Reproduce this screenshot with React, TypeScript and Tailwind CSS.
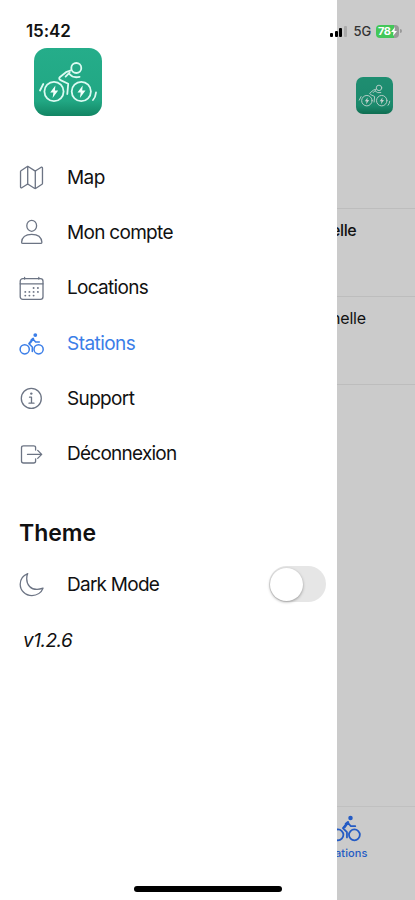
import React from "react";
import { IoMapOutline } from "react-icons/io5";

type IconProps = { className?: string };

function Logo({ className }: IconProps) {
  return (
    <svg viewBox="0 0 68 68" className={className} fill="none">
      <defs>
        <linearGradient id="tile" x1="0" y1="0" x2="0" y2="1">
          <stop offset="0" stopColor="#25ad8a" />
          <stop offset="0.78" stopColor="#21a783" />
          <stop offset="1" stopColor="#128563" />
        </linearGradient>
      </defs>
      <rect width="68" height="68" rx="13" fill="url(#tile)" />
      <g stroke="#dcfaf2" strokeWidth="1.8" strokeLinecap="round" strokeLinejoin="round">
        <circle cx="20" cy="43.5" r="9.6" />
        <circle cx="47.3" cy="43.5" r="9.6" />
        <circle cx="42.3" cy="20" r="5" />
        <path d="M37 22.3L32 24.2L26 29Q24 31 27 32.4L34.2 35.8L33.3 46" />
        <path d="M35.6 24.6L31.6 28.6" />
        <path d="M35.4 26Q39 30.4 45.6 28.8" />
        <path d="M9.3 36L6 42.5M62 44.5Q61.5 49.4 59 52" />
      </g>
      <path d="M21.4 37.5L16.2 44.5H19.4L18.6 50L24.2 42.4H20.9ZM48.7 37.5L43.5 44.5H46.7L45.9 50L51.5 42.4H48.2Z" fill="#f2fffb" />
    </svg>
  );
}

function Line({ className, children }: IconProps & { children: React.ReactNode }) {
  return (
    <svg viewBox="0 0 27 27" className={className} fill="none" stroke="currentColor" strokeWidth="1.3" strokeLinecap="round" strokeLinejoin="round">
      {children}
    </svg>
  );
}

const PersonIcon = ({ className }: IconProps) => (
  <Line className={className}>
    <ellipse cx="13.7" cy="6.8" rx="4.9" ry="5.5" />
    <path d="M3.6 23.2C4 17.6 8.4 15.3 13.7 15.3S23.4 17.6 23.9 23.2Q23.9 24.4 22.5 24.4H5Q3.6 24.4 3.6 23.2Z" />
  </Line>
);

const CalendarIcon = ({ className }: IconProps) => (
  <Line className={className}>
    <rect x="2.2" y="3.6" width="22.8" height="20.8" rx="2.6" />
    <path d="M2.2 8.8H25M6.6 2.4V4M20.8 2.4V4" />
    <g fill="currentColor" stroke="none">
      <circle cx="15.6" cy="13" r="0.95" />
      <circle cx="19.9" cy="13" r="0.95" />
      <circle cx="7.3" cy="16.9" r="0.95" />
      <circle cx="11.4" cy="16.9" r="0.95" />
      <circle cx="15.6" cy="16.9" r="0.95" />
      <circle cx="19.9" cy="16.9" r="0.95" />
      <circle cx="7.3" cy="20.6" r="0.95" />
      <circle cx="11.4" cy="20.6" r="0.95" />
      <circle cx="15.6" cy="20.6" r="0.95" />
    </g>
  </Line>
);

const BikeIcon = ({ className }: IconProps) => (
  <svg viewBox="0 0 27 27" className={className} fill="none" stroke="currentColor" strokeWidth="1.5" strokeLinecap="round" strokeLinejoin="round">
    <circle cx="6.7" cy="19.3" r="4.6" />
    <circle cx="20.6" cy="19.3" r="4.6" />
    <path d="M14.3 21.5V17L10.9 13.6L15 9L17.6 12H21.3" />
    <path d="M13.4 10L15.2 8.6L12.3 12.6" strokeWidth="2" />
    <circle cx="17.3" cy="5.1" r="1.9" fill="currentColor" stroke="none" />
  </svg>
);

const InfoIcon = ({ className }: IconProps) => (
  <Line className={className}>
    <circle cx="13.3" cy="13.4" r="10" />
    <path d="M11.5 12.2H13.5V18M11 18.2H16" />
    <circle cx="13.3" cy="8.6" r="1.2" fill="currentColor" stroke="none" />
  </Line>
);

const LogOutIcon = ({ className }: IconProps) => (
  <Line className={className}>
    <path d="M17.6 9V6.6Q17.6 4.8 15.6 4.8H5.6Q3.5 4.8 3.5 6.8V20Q3.5 22 5.6 22H15.6Q17.6 22 17.6 20.2V17.8M9.5 13.4H23.6M19.7 9.4L23.7 13.4L19.7 17.4" />
  </Line>
);

const MoonIcon = ({ className }: IconProps) => (
  <Line className={className}>
    <path d="M9.7 2.6C5.2 4.4 2.2 8.7 2.2 13.2C2.2 19.5 7.4 24.6 13.9 24.6C18.9 24.6 23.4 21.6 25 17.2C22.9 18 21 18.4 19 18.4C12.9 18.4 8.7 14 8.7 7.8C8.7 5.9 9 4.2 9.7 2.6Z" />
  </Line>
);

const MapIcon = ({ className }: IconProps) => (
  <IoMapOutline className={`${className} [&_*]:[stroke-width:25px]`} />
);

const items = [
  { label: "Map", Icon: MapIcon, text: "tracking-[-0.6px]" },
  { label: "Mon compte", Icon: PersonIcon, text: "tracking-[-0.7px]" },
  { label: "Locations", Icon: CalendarIcon, text: "tracking-[-0.7px]" },
  { label: "Stations", Icon: BikeIcon, text: "tracking-[-0.55px]", active: true },
  { label: "Support", Icon: InfoIcon, text: "tracking-[-0.65px]" },
  { label: "Déconnexion", Icon: LogOutIcon, text: "tracking-[-0.75px]" },
];

export default function App() {
  return (
    <div className="relative flex h-[900px] w-[415px] overflow-hidden bg-[#cbcbcb] font-['Inter',sans-serif] text-[#111]">
      <aside className="flex w-[337px] shrink-0 flex-col bg-white">
        <div className="pt-[21px] pl-[26px] text-[17px] leading-5 font-semibold tracking-[-0.1px]">15:42</div>
        <Logo className="mt-[7px] ml-[34px] size-[68px]" />
        <nav className="mt-[34px] flex flex-col">
          {items.map(({ label, Icon, text, active }) => (
            <a key={label} className={`flex h-[55.3px] items-center pl-[18px] ${active ? "text-[#3b7ee8]" : ""}`}>
              <Icon className={`size-[27px] ${active ? "" : "text-[#6c7484]"}`} />
              <span className={`ml-[22px] text-[19px] leading-6 ${text}`}>{label}</span>
            </a>
          ))}
        </nav>
        <h2 className="mt-[37px] ml-[19px] text-[23px] leading-7 font-semibold">Theme</h2>
        <div className="mt-[9px] flex h-[57px] items-center pr-[11px] pl-[18px]">
          <MoonIcon className="size-[27px] text-[#6c7484]" />
          <span className="mt-[2px] ml-[22px] text-[19px] leading-6 tracking-[-0.75px]">Dark Mode</span>
          <div className="ml-auto flex h-[36px] w-[57px] items-center rounded-full bg-[#e6e6e6] pl-px">
            <div className="size-[33px] rounded-full bg-white shadow-[0_1px_3px_rgba(0,0,0,0.35)]" />
          </div>
        </div>
        <p className="mt-[16px] ml-[23px] text-[19px] leading-6 tracking-[-0.5px] italic">v1.2.6</p>
      </aside>

      <main className="flex min-w-0 flex-1 flex-col overflow-hidden">
        <div className="flex h-[209px] items-start border-b border-[#bdbdbd] pt-[77px] pl-[19px]">
          <Logo className="size-[37px] brightness-[0.82]" />
        </div>
        <div className="flex h-[88px] justify-start border-b border-[#bdbdbd] pt-[11px]">
          <span className="-ml-[6px] text-[16px] leading-5 font-medium tracking-[-0.4px]">elle</span>
        </div>
        <div className="flex h-[88px] justify-start border-b border-[#bdbdbd] pt-[11px]">
          <span className="-ml-[6px] text-[16px] leading-5 tracking-[-0.2px]">nelle</span>
        </div>
        <div className="mt-auto flex h-[94px] flex-col border-t border-[#c0c0c0] pt-[5px] text-[#245bc4]">
          <BikeIcon className="-ml-[7px] size-[32px] shrink-0" />
          <span className="-ml-[2px] mt-px text-[11px] leading-4 font-medium tracking-[0.1px]">ations</span>
        </div>
      </main>

      <div className="absolute top-[24px] left-[330px] flex h-[14px] items-center">
        <div className="flex h-[11px] items-end gap-[1.5px]">
          <i className="h-[4px] w-[3px] rounded-[1px] bg-black" />
          <i className="h-[6px] w-[3px] rounded-[1px] bg-black" />
          <i className="h-[9px] w-[3px] rounded-[1px] bg-black" />
          <i className="h-[11px] w-[3px] rounded-[1px] bg-[#aaa]" />
        </div>
        <span className="ml-[7px] text-[13px] leading-[14px] font-medium text-[#333]">5G</span>
        <div className="ml-[5px] flex h-[13px] w-[23px] items-center justify-center rounded-[4px] bg-[linear-gradient(90deg,#43c759_80%,#999_80%)] text-[11px] font-bold tracking-[-0.5px] text-white">
          78
          <svg viewBox="0 0 6 9" className="ml-px h-[9px] w-[6px]" fill="white"><path d="M4 0L0 5h2.5L2 9l4-5H3.5z" /></svg>
        </div>
        <i className="ml-px h-[4px] w-[1.5px] rounded-r bg-[#999]" />
      </div>

      <div className="absolute top-[885.5px] left-[134px] h-[6px] w-[148px] rounded-full bg-black" />
    </div>
  );
}
